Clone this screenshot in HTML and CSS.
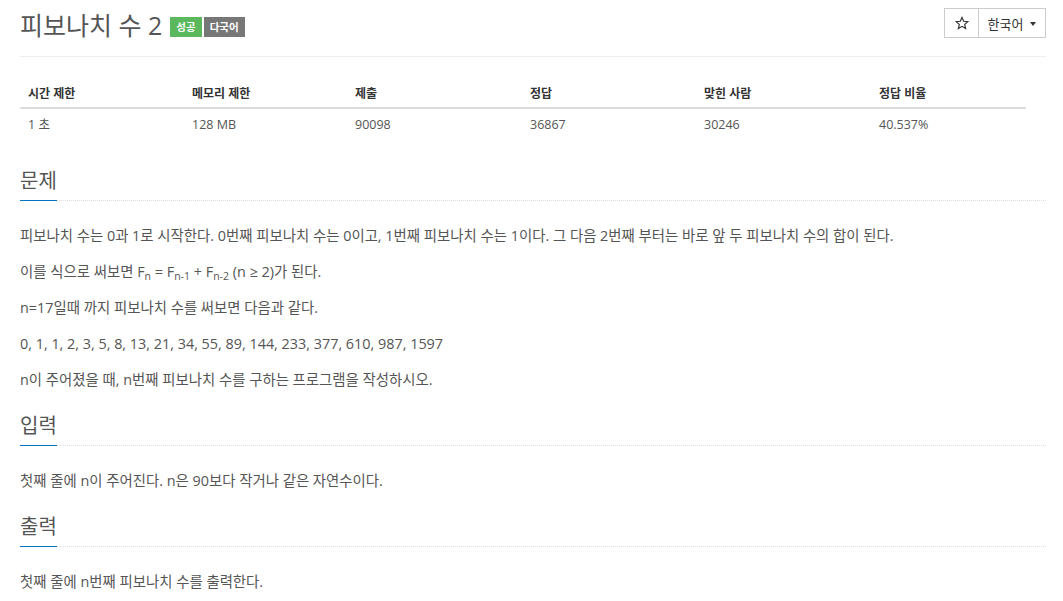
FILE: index.html
```html
<!DOCTYPE html>
<html lang="ko">
<head>
<meta charset="utf-8">
<title>피보나치 수 2</title>
<link rel="stylesheet" href="styles.css">
</head>
<body>
<div class="page">
  <div class="page-header">
    <h1 class="title">
      <span class="title-text">피보나치 수 2</span>
      <span class="label label-success">성공</span>
      <span class="label label-default">다국어</span>
    </h1>
    <div class="btn-group">
      <button class="btn btn-star"><svg width="14" height="14" viewBox="0 0 24 24" aria-hidden="true"><path d="M12 2.5l2.9 6.6 7.1.6-5.4 4.7 1.6 7-6.2-3.7-6.2 3.7 1.6-7-5.4-4.7 7.1-.6z" fill="none" stroke="#333" stroke-width="2" stroke-linejoin="miter"/></svg></button>
      <button class="btn btn-lang">한국어 <span class="caret"></span></button>
    </div>
  </div>

  <table class="info-table">
    <thead>
      <tr>
        <th class="c1">시간 제한</th>
        <th class="c2">메모리 제한</th>
        <th class="c3">제출</th>
        <th class="c4">정답</th>
        <th class="c5">맞힌 사람</th>
        <th class="c6">정답 비율</th>
      </tr>
    </thead>
    <tbody>
      <tr>
        <td>1 초</td>
        <td>128 MB</td>
        <td>90098</td>
        <td>36867</td>
        <td>30246</td>
        <td>40.537%</td>
      </tr>
    </tbody>
  </table>

  <section class="problem-section first">
    <div class="headline"><h2>문제</h2></div>
    <div class="problem-text">
      <p>피보나치 수는 0과 1로 시작한다. 0번째 피보나치 수는 0이고, 1번째 피보나치 수는 1이다. 그 다음 2번째 부터는 바로 앞 두 피보나치 수의 합이 된다.</p>
      <p>이를 식으로 써보면 F<sub>n</sub> = F<sub>n-1</sub> + F<sub>n-2</sub> (n ≥ 2)가 된다.</p>
      <p>n=17일때 까지 피보나치 수를 써보면 다음과 같다.</p>
      <p>0, 1, 1, 2, 3, 5, 8, 13, 21, 34, 55, 89, 144, 233, 377, 610, 987, 1597</p>
      <p>n이 주어졌을 때, n번째 피보나치 수를 구하는 프로그램을 작성하시오.</p>
    </div>
  </section>

  <section class="problem-section">
    <div class="headline"><h2>입력</h2></div>
    <div class="problem-text">
      <p>첫째 줄에 n이 주어진다. n은 90보다 작거나 같은 자연수이다.</p>
    </div>
  </section>

  <section class="problem-section">
    <div class="headline"><h2>출력</h2></div>
    <div class="problem-text">
      <p>첫째 줄에 n번째 피보나치 수를 출력한다.</p>
    </div>
  </section>
</div>
</body>
</html>
```

FILE: styles.css
```css
* { box-sizing: border-box; }
html, body { margin: 0; padding: 0; background: #fff; }
body {
  font-family: "Open Sans", "Noto Sans CJK KR", sans-serif;
  font-size: 14.4px;
  color: #555;
}
.page {
  padding: 0 17px 0 20px;
}
.page-header {
  display: flex;
  justify-content: space-between;
  align-items: flex-start;
  border-bottom: 1px solid #eee;
  height: 57px;
  padding-top: 8px;
}
.title {
  margin: 0;
  font-weight: 400;
  font-size: 25px;
  line-height: 34px;
  color: #555;
  display: flex;
  align-items: center;
  gap: 2px;
}
.title-text { margin-right: 6px; }
.label {
  display: inline-block;
  font-size: 10.5px;
  font-weight: 700;
  color: #fff;
  line-height: 20px;
  height: 20px;
  padding: 0 6px;
  margin-top: 4px;
}
.label-success { background: #5cb85c; }
.label-default { background: #777; }

.btn-group { display: flex; }
.btn {
  font-family: "Open Sans", "Noto Sans CJK KR", sans-serif;
  background: #fff;
  border: 1px solid #ccc;
  height: 30px;
  font-size: 13px;
  color: #333;
  padding: 0;
  display: flex;
  align-items: center;
  justify-content: center;
}
.btn-star {
  width: 35px;
}
.btn-lang {
  width: 67px;
  border-left: none;
  gap: 7px;
}
.caret {
  display: inline-block;
  width: 0; height: 0;
  border-top: 4px solid #333;
  border-left: 3px solid transparent;
  border-right: 3px solid transparent;
  margin-top: 2px;
}

.info-table {
  border-collapse: collapse;
  width: 1006px;
  margin-top: 18px;
  font-size: 12.5px;
  color: #555;
}
.info-table th, .info-table td {
  text-align: left;
  padding: 6px 8px;
  line-height: 20px;
}
.info-table th {
  font-size: 12px;
  font-weight: 700;
  color: #333;
  padding-top: 9px;
  padding-bottom: 3px;
  border-bottom: 2px solid #ddd;
}
.c1 { width: 164px; }
.c2 { width: 163px; }
.c3 { width: 175px; }
.c4 { width: 174px; }
.c5 { width: 175px; }
.c6 { width: auto; }

.problem-section { margin-top: 21px; }
.problem-section.first { margin-top: 26px; }
.headline {
  border-bottom: 1px dotted #ddd;
  display: flex;
}
.headline h2 {
  margin: 0 0 -1px 0;
  font-size: 20px;
  font-weight: 400;
  line-height: 28px;
  color: #555;
  border-bottom: 1px solid #0076c0;
  padding-bottom: 5px;
}
.problem-text { padding-top: 24px; }
.problem-text p {
  margin: 0 0 14px 0;
  line-height: 22px;
}
sub {
  font-size: 10.5px;
  vertical-align: -3px;
  line-height: 0;
}
```
